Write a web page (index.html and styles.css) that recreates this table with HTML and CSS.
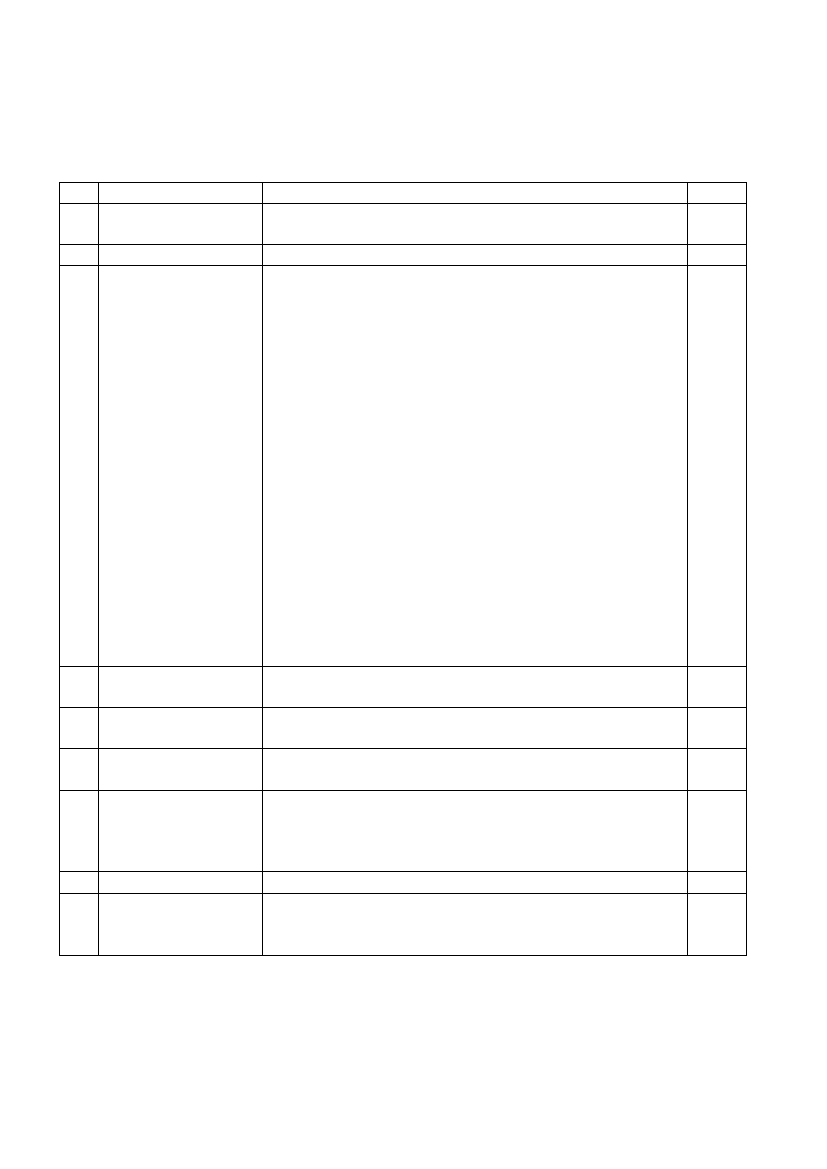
FILE: index.html
```html
<!DOCTYPE html>
<html lang="en">
<head>
<meta charset="utf-8">
<title>Table</title>
<link rel="stylesheet" href="styles.css">
</head>
<body>
<main class="page">
  <div class="grid">
    <div class="c"></div><div class="c"></div><div class="c"></div><div class="c"></div>
    <div class="c"></div><div class="c"></div><div class="c"></div><div class="c"></div>
    <div class="c"></div><div class="c"></div><div class="c"></div><div class="c"></div>
    <div class="c"></div><div class="c"></div><div class="c"></div><div class="c"></div>
    <div class="c"></div><div class="c"></div><div class="c"></div><div class="c"></div>
    <div class="c"></div><div class="c"></div><div class="c"></div><div class="c"></div>
    <div class="c"></div><div class="c"></div><div class="c"></div><div class="c"></div>
    <div class="c"></div><div class="c"></div><div class="c"></div><div class="c"></div>
    <div class="c"></div><div class="c"></div><div class="c"></div><div class="c"></div>
    <div class="c"></div><div class="c"></div><div class="c"></div><div class="c"></div>
  </div>
</main>
</body>
</html>
```
FILE: styles.css
```css
html, body {
  margin: 0;
  padding: 0;
  background: #ffffff;
  font-family: "Liberation Sans", Arial, sans-serif;
}

.page {
  padding: 182px 0 0 59px;
}

.grid {
  display: grid;
  width: max-content;
  grid-template-columns: 38px 163px 424px 58px;
  grid-template-rows: 20px 40px 20px 400px 40px 40px 41px 80px 21px 61px;
  gap: 1px;
  padding: 1px;
  background: #000000;
}

.c {
  background: #ffffff;
}
```
